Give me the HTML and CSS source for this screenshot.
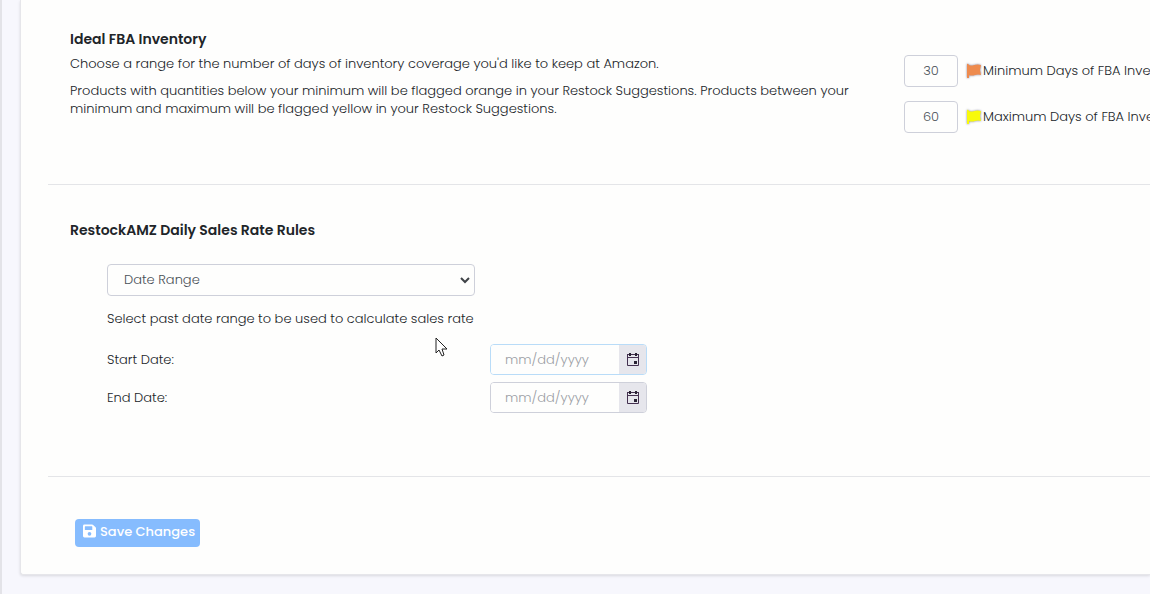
FILE: index.html
```html
<!DOCTYPE html>
<html lang="en">
<head>
    <meta charset="UTF-8">
    <meta name="viewport" content="width=device-width, initial-scale=1.0">
    <title>Restock Settings</title>
    <link rel="stylesheet" href="styles.css">
</head>
<body>
    <main class="page">
        <form class="card">
            <section class="inventory">
                <div class="inventory-text">
                    <h4>Ideal FBA Inventory</h4>
                    <p>Choose a range for the number of days of inventory coverage you'd like to keep at Amazon.</p>
                    <p>Products with quantities below your minimum will be flagged orange in your Restock Suggestions. Products between your minimum and maximum will be flagged yellow in your Restock Suggestions.</p>
                </div>
                <div class="inventory-days">
                    <div class="days-row">
                        <input class="control days-input" type="text" id="min-days" value="30">
                        <svg class="flag flag-orange" viewBox="0 0 18 18" aria-hidden="true">
                            <path d="M2 2 Q3 1 4 3 C8 5 10 1 16 3 L15 8 L16 13 C11 11 9 15 4 13 L4 16 L2 16 Z"/>
                        </svg>
                        <label for="min-days">Minimum Days of FBA Inventory</label>
                    </div>
                    <div class="days-row">
                        <input class="control days-input" type="text" id="max-days" value="60">
                        <svg class="flag flag-yellow" viewBox="0 0 18 18" aria-hidden="true">
                            <path d="M2 2 Q3 1 4 3 C8 5 10 1 16 3 L15 8 L16 13 C11 11 9 15 4 13 L4 16 L2 16 Z"/>
                        </svg>
                        <label for="max-days">Maximum Days of FBA Inventory</label>
                    </div>
                </div>
            </section>

            <section class="rules">
                <h4 id="rules-title">RestockAMZ Daily Sales Rate Rules</h4>
                <div class="rules-body">
                    <div class="select-wrap">
                        <select class="control" aria-labelledby="rules-title">
                            <option>Date Range</option>
                        </select>
                        <svg class="chevron" viewBox="0 0 10 8" aria-hidden="true">
                            <path d="M1 2 L5 6 L9 2"/>
                        </svg>
                    </div>
                    <p>Select past date range to be used to calculate sales rate</p>
                    <div class="date-row">
                        <label for="start-date">Start Date:</label>
                        <div class="date-group focused">
                            <input type="text" id="start-date" placeholder="mm/dd/yyyy">
                            <button type="button" class="date-btn" aria-label="Pick start date">
                                <svg viewBox="0 0 14 15" aria-hidden="true">
                                    <path class="line" d="M1.5 3 V13.5 H12.5 V3 M1 2.5 H13 M1 5.5 H13"/>
                                    <path d="M3 1h2v3h-2z M9 1h2v3h-2z M8 9h3v3h-3z"/>
                                </svg>
                            </button>
                        </div>
                    </div>
                    <div class="date-row">
                        <label for="end-date">End Date:</label>
                        <div class="date-group">
                            <input type="text" id="end-date" placeholder="mm/dd/yyyy">
                            <button type="button" class="date-btn" aria-label="Pick end date">
                                <svg viewBox="0 0 14 15" aria-hidden="true">
                                    <path class="line" d="M1.5 3 V13.5 H12.5 V3 M1 2.5 H13 M1 5.5 H13"/>
                                    <path d="M3 1h2v3h-2z M9 1h2v3h-2z M8 9h3v3h-3z"/>
                                </svg>
                            </button>
                        </div>
                    </div>
                </div>
            </section>

            <div class="actions">
                <button type="submit" class="save-btn">
                    <svg viewBox="0 0 448 512" aria-hidden="true">
                        <path fill-rule="evenodd" d="M434 130 L350 46 A48 48 0 0 0 316 32 H48 A48 48 0 0 0 0 80 V432 A48 48 0 0 0 48 480 H400 A48 48 0 0 0 448 432 V164 A48 48 0 0 0 434 130 Z M224 416 A64 64 0 1 1 224 288 A64 64 0 1 1 224 416 Z M64 108 A12 12 0 0 1 76 96 H308 L320 111 V212 A12 12 0 0 1 308 224 H76 A12 12 0 0 1 64 212 Z"/>
                    </svg>
                    Save Changes
                </button>
            </div>
        </form>

        <svg class="cursor" viewBox="0 0 13 20" aria-hidden="true">
            <path d="M1 1 V16 L4 13 L7 19 L9 18 L7 12 H12 Z"/>
        </svg>
    </main>
</body>
</html>
```
FILE: styles.css
```css
* {
    box-sizing: border-box;
    margin: 0;
    padding: 0;
}
body {
    background-color: #f7f7fd;
    color: #212529;
    font-family: Poppins, Inter, sans-serif;
    font-size: 13px;
    font-weight: 300;
    line-height: 18px;
}
input, select, button {
    font: inherit;
    color: inherit;
}
h4 {
    font-size: 14px;
    font-weight: 600;
    line-height: 22px;
}
.page {
    position: relative;
    min-height: 100vh;
    padding: 0 0 20px 18px;
    border-left: 2px solid #e3e3e8;
    overflow: hidden;
}
.card {
    padding-left: 27px;
    background-color: #fefefd;
    border: 1px solid #e6e6ea;
    border-width: 0 0 1px 1px;
    border-radius: 0 0 0 3px;
    box-shadow: 0 1px 3px rgba(0, 0, 0, .12);
}

/* ideal inventory */
.inventory {
    display: flex;
    justify-content: space-between;
    padding: 28px 0 51px 22px;
    border-bottom: 1px solid #e4e5e8;
}
.inventory-text {
    width: 74%;
}
.inventory-text p {
    margin-bottom: 9px;
}
.inventory-text h4 {
    margin-bottom: 5px;
}
.inventory-days {
    flex: none;
    width: 246px;
    padding-top: 27px;
    white-space: nowrap;
}
.days-row {
    display: flex;
    align-items: center;
    margin-bottom: 14px;
}
.days-row:last-child {
    margin-bottom: 0;
}
.control {
    height: 32px;
    background-color: #fefefd;
    border: 1px solid #ced0da;
    border-radius: 4px;
    color: #495057;
}
.days-input {
    flex: none;
    width: 54px;
    text-align: center;
}
.flag {
    flex: none;
    width: 18px;
    height: 18px;
    margin-left: 7px;
    filter: drop-shadow(0 0 1px rgba(80, 80, 120, .7));
}
.flag-orange {
    fill: #ee8b4e;
}
.flag-yellow {
    fill: #f8fa0c;
}

/* sales rate rules */
.rules {
    padding: 34px 0 63px 22px;
    border-bottom: 1px solid #e4e5e8;
}
.rules-body {
    padding: 23px 0 0 37px;
}
.select-wrap {
    position: relative;
    width: 368px;
    margin-bottom: 14px;
}
.select-wrap select {
    display: block;
    width: 100%;
    padding: 0 16px;
    appearance: none;
}
.chevron {
    position: absolute;
    top: 12px;
    right: 5px;
    width: 10px;
    height: 8px;
    fill: none;
    stroke: #3f4347;
    stroke-width: 2;
    pointer-events: none;
}
.rules-body p {
    margin-bottom: 16px;
}
.date-row {
    display: grid;
    grid-template-columns: 383px 157px;
    align-items: center;
    margin-bottom: 7px;
}
.date-row:last-child {
    margin-bottom: 0;
}
.date-group {
    display: flex;
    height: 31px;
    border: 1px solid #ced0da;
    border-radius: 4px;
    overflow: hidden;
}
.date-group.focused {
    border-color: #b9dcf8;
}
.date-group input {
    flex: 1;
    min-width: 0;
    padding-left: 14px;
    background-color: #fefefd;
    border: 0;
}
.date-group input::placeholder {
    color: #9c9fa5;
}
.date-btn {
    display: flex;
    align-items: center;
    justify-content: center;
    width: 27px;
    background-color: #e6e6ec;
    border: 0;
}
.date-btn svg {
    width: 14px;
    height: 15px;
    fill: #292333;
}
.date-btn .line {
    fill: none;
    stroke: #43304f;
}

/* save */
.actions {
    padding: 42px 0 27px 27px;
}
.save-btn {
    display: flex;
    gap: 4px;
    width: 125px;
    height: 28px;
    padding: 4px 8px;
    background-color: #86bcfe;
    border: 0;
    border-radius: 4px;
    color: #fff;
    font-weight: 500;
    white-space: nowrap;
}
.save-btn svg {
    flex: none;
    width: 13px;
    height: 16px;
    fill: #fff;
}

.cursor {
    position: absolute;
    top: 337px;
    left: 433px;
    width: 13px;
    height: 20px;
    fill: #fff;
    stroke: #222;
}
```
